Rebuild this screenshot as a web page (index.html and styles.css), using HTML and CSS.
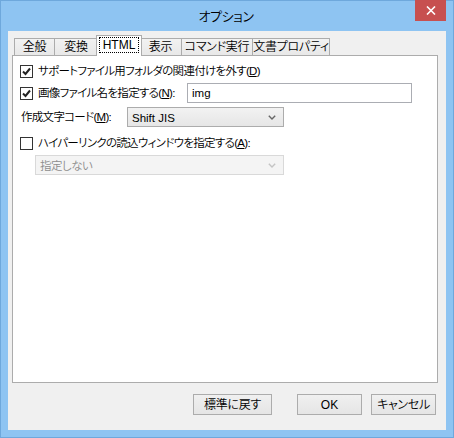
FILE: index.html
```html
<!DOCTYPE html>
<html lang="ja">
<head>
<meta charset="utf-8">
<title>オプション</title>
<link rel="stylesheet" href="styles.css">
</head>
<body>
<div class="window">
  <div class="titlebar">
    <span class="title">オプション</span>
    <div class="close"><svg width="10" height="9" viewBox="0 0 10 9"><path d="M1 0.5 L9 8.5 M9 0.5 L1 8.5" stroke="#fff" stroke-width="1.6" fill="none"/></svg></div>
  </div>
  <div class="client">
    <div class="tabs">
      <div class="tab tab-general">全般</div>
      <div class="tab tab-convert">変換</div>
      <div class="tab active"><span class="focus">HTML</span></div>
      <div class="tab tab-view">表示</div>
      <div class="tab tab-command">コマンド実行</div>
      <div class="tab tab-props">文書プロパティ</div>
    </div>
    <div class="panel">
      <div class="row r1">
        <span class="cb"><svg width="11" height="11" viewBox="0 0 11 11"><path d="M2 5.5 L4.5 8 L9 2.5" stroke="#222" stroke-width="2" fill="none"/></svg></span>
        <span>サポートファイル用フォルダの関連付けを外す(<u>D</u>)</span>
      </div>
      <div class="row r2">
        <div class="cb-wrap">
          <span class="cb"><svg width="11" height="11" viewBox="0 0 11 11"><path d="M2 5.5 L4.5 8 L9 2.5" stroke="#222" stroke-width="2" fill="none"/></svg></span>
          <span>画像ファイル名を指定する(<u>N</u>):</span>
        </div>
        <div class="textbox">img</div>
      </div>
      <div class="row r3">
        <span class="label">作成文字コード(<u>M</u>):</span>
        <div class="combo"><span>Shift JIS</span><svg width="8" height="5" viewBox="0 0 8 5"><path d="M0.8 0.8 L4 4 L7.2 0.8" stroke="#666" stroke-width="1.4" fill="none"/></svg></div>
      </div>
      <div class="row r4">
        <span class="cb"></span>
        <span>ハイパーリンクの読込ウィンドウを指定する(<u>A</u>):</span>
      </div>
      <div class="row r5">
        <div class="combo disabled"><span>指定しない</span><svg width="8" height="5" viewBox="0 0 8 5"><path d="M0.8 0.8 L4 4 L7.2 0.8" stroke="#c4c4c4" stroke-width="1.4" fill="none"/></svg></div>
      </div>
    </div>
    <div class="buttons">
      <div class="btn btn-reset">標準に戻す</div>
      <div class="btn btn-ok">OK</div>
      <div class="btn btn-cancel">キャンセル</div>
    </div>
  </div>
</div>
</body>
</html>
```
FILE: styles.css
```css
html, body {
  margin: 0;
  padding: 0;
}
body {
  font-family: "Liberation Sans", "Noto Sans CJK JP", sans-serif;
  font-size: 11.5px;
  font-weight: 350;
  line-height: 14px;
  letter-spacing: -0.7px;
  font-feature-settings: "palt";
  color: #000;
  white-space: nowrap;
}
.window {
  width: 454px;
  height: 438px;
  box-sizing: border-box;
  background: #8ec4f2;
  border: 1px solid #6ea8dc;
  padding: 0 7px 7px;
  display: flex;
  flex-direction: column;
}
.titlebar {
  height: 30px;
  flex: none;
  position: relative;
  display: flex;
  align-items: center;
  justify-content: center;
}
.title {
  font-size: 13px;
  letter-spacing: -0.4px;
  margin-left: -2px;
  margin-top: 1px;
}
.close {
  position: absolute;
  top: -1px;
  right: 0;
  width: 31px;
  height: 21px;
  background: #c75050;
  display: flex;
  align-items: center;
  justify-content: center;
}
.client {
  flex: 1;
  background: #f0f0f0;
  padding: 4px 8px 0 4px;
  display: flex;
  flex-direction: column;
}
.tabs {
  display: flex;
  align-items: flex-end;
  height: 21px;
  padding-left: 2px;
}
.tab {
  height: 17px;
  box-sizing: border-box;
  margin-bottom: 1px;
  padding-top: 1px;
  border: 1px solid #acacac;
  border-bottom: none;
  background: linear-gradient(#f2f2f2, #e8e8e8);
  margin-left: -1px;
  text-align: center;
  flex: none;
  font-size: 12px;
  letter-spacing: -0.3px;
}
.tab-general { width: 41px; margin-left: 0; }
.tab-convert { width: 44px; }
.tab-view { width: 43px; }
.tab-command { width: 72px; }
.tab-props { width: 78px; }
.tab.active {
  position: relative;
  z-index: 1;
  width: 46px;
  height: 21px;
  margin: 0 -2px;
  padding: 1px 2px 0;
  background: #fff;
}
.focus {
  display: block;
  height: 16px;
  box-sizing: border-box;
  border: 1px dotted #000;
  line-height: 14px;
  letter-spacing: 0;
}
.panel {
  height: 328px;
  box-sizing: border-box;
  margin-top: -1px;
  background: #fff;
  border: 1px solid #acacac;
  padding: 5px 0 0 7px;
}
.row {
  display: flex;
  align-items: center;
  height: 20px;
}
.r2 { margin-top: 2px; }
.r3 { margin-top: 4px; }
.r4 { margin-top: 6px; }
.r5 { margin-top: 2px; padding-left: 15px; }
.cb {
  width: 13px;
  height: 13px;
  box-sizing: border-box;
  border: 1px solid #333;
  background: #fff;
  margin-right: 5px;
  display: flex;
  align-items: center;
  justify-content: center;
  flex: none;
}
.cb-wrap {
  width: 167px;
  display: flex;
  align-items: center;
  flex: none;
}
.textbox {
  width: 225px;
  height: 20px;
  box-sizing: border-box;
  border: 1px solid #abadb3;
  padding: 2px 4px 0;
  background: #fff;
  letter-spacing: 0;
}
.label {
  width: 106px;
  margin-left: 1px;
  flex: none;
}
.combo {
  width: 157px;
  height: 20px;
  box-sizing: border-box;
  border: 1px solid #acacac;
  background: linear-gradient(#f2f2f2, #e6e6e6);
  display: flex;
  align-items: center;
  justify-content: space-between;
  padding: 1px 7px 0 4px;
  letter-spacing: 0;
}
.combo.disabled {
  width: 249px;
  border-color: #d9d9d9;
  background: #f4f4f4;
  color: #8d8d8d;
  letter-spacing: -0.5px;
}
.buttons {
  display: flex;
  justify-content: flex-end;
  margin-top: 11px;
  margin-right: 2px;
}
.btn {
  height: 21px;
  box-sizing: border-box;
  border: 1px solid #acacac;
  background: linear-gradient(#f0f0f0, #e5e5e5);
  display: flex;
  align-items: center;
  justify-content: center;
  padding-top: 1px;
  font-size: 12px;
  letter-spacing: -0.3px;
}
.btn-reset { width: 79px; margin-right: 25px; }
.btn-ok { width: 65px; margin-right: 9px; letter-spacing: 0; }
.btn-cancel { width: 65px; }
```
